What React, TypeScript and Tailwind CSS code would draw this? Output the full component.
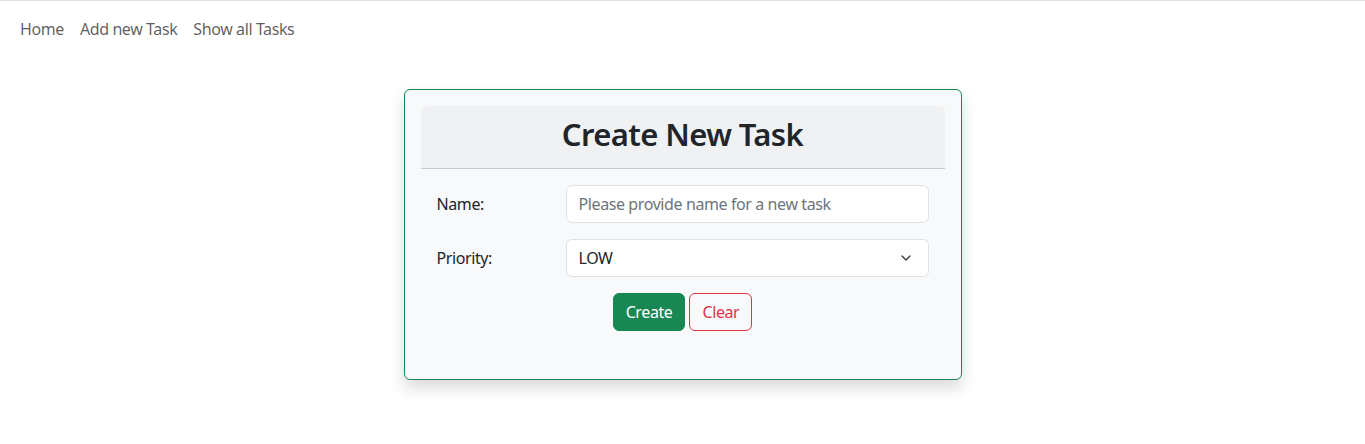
import { ChevronDown } from "lucide-react";

export default function App() {
  return (
    <div className="min-h-screen bg-white font-['Segoe_UI','Noto_Sans',sans-serif] tracking-[-0.4px] text-[#212529]">
      <nav className="border-t border-[#dee2e6] px-3 pb-2 pt-[8px]">
        <ul className="flex text-base leading-6 text-[rgba(0,0,0,0.65)]">
          <li className="px-2 py-2">Home</li>
          <li className="px-2 py-2">Add new Task</li>
          <li className="px-2 py-2">Show all Tasks</li>
        </ul>
      </nav>

      <div className="flex justify-center pt-[32px]">
        <div className="w-[558px] rounded-md border border-[#198754] bg-[#f8f9fa] p-4 pb-[48px] shadow-[0_8px_16px_rgba(0,0,0,0.15)]">
          <div className="flex h-[63px] items-center justify-center rounded-t-md border-b border-[#c9cacb] bg-[#f0f1f2] pb-[5px]">
            <h2 className="text-[31px] font-semibold leading-none tracking-[-0.6px]">Create New Task</h2>
          </div>

          <div className="flex flex-col gap-4 px-4 pt-4">
            <div className="flex items-center">
              <label className="w-[129px] text-base">Name:</label>
              <input
                className="h-[38px] flex-1 rounded-md border border-[#dee2e6] bg-white px-3 text-base tracking-[-0.4px] placeholder:text-[#6c757d] focus:outline-none"
                placeholder="Please provide name for a new task"
              />
            </div>
            <div className="flex items-center">
              <label className="w-[129px] text-base">Priority:</label>
              <div className="flex h-[38px] flex-1 items-center justify-between rounded-md border border-[#dee2e6] bg-white pl-3 pr-[14px] text-base">
                <span>LOW</span>
                <ChevronDown size={16} strokeWidth={2} className="text-[#343a40]" />
              </div>
            </div>
            <div className="flex justify-center gap-1">
              <button className="h-[38px] rounded-md border border-[#198754] bg-[#198754] px-3 text-base text-white">
                Create
              </button>
              <button className="h-[38px] rounded-md border border-[#dc3545] px-3 text-base text-[#dc3545]">
                Clear
              </button>
            </div>
          </div>
        </div>
      </div>
    </div>
  );
}
